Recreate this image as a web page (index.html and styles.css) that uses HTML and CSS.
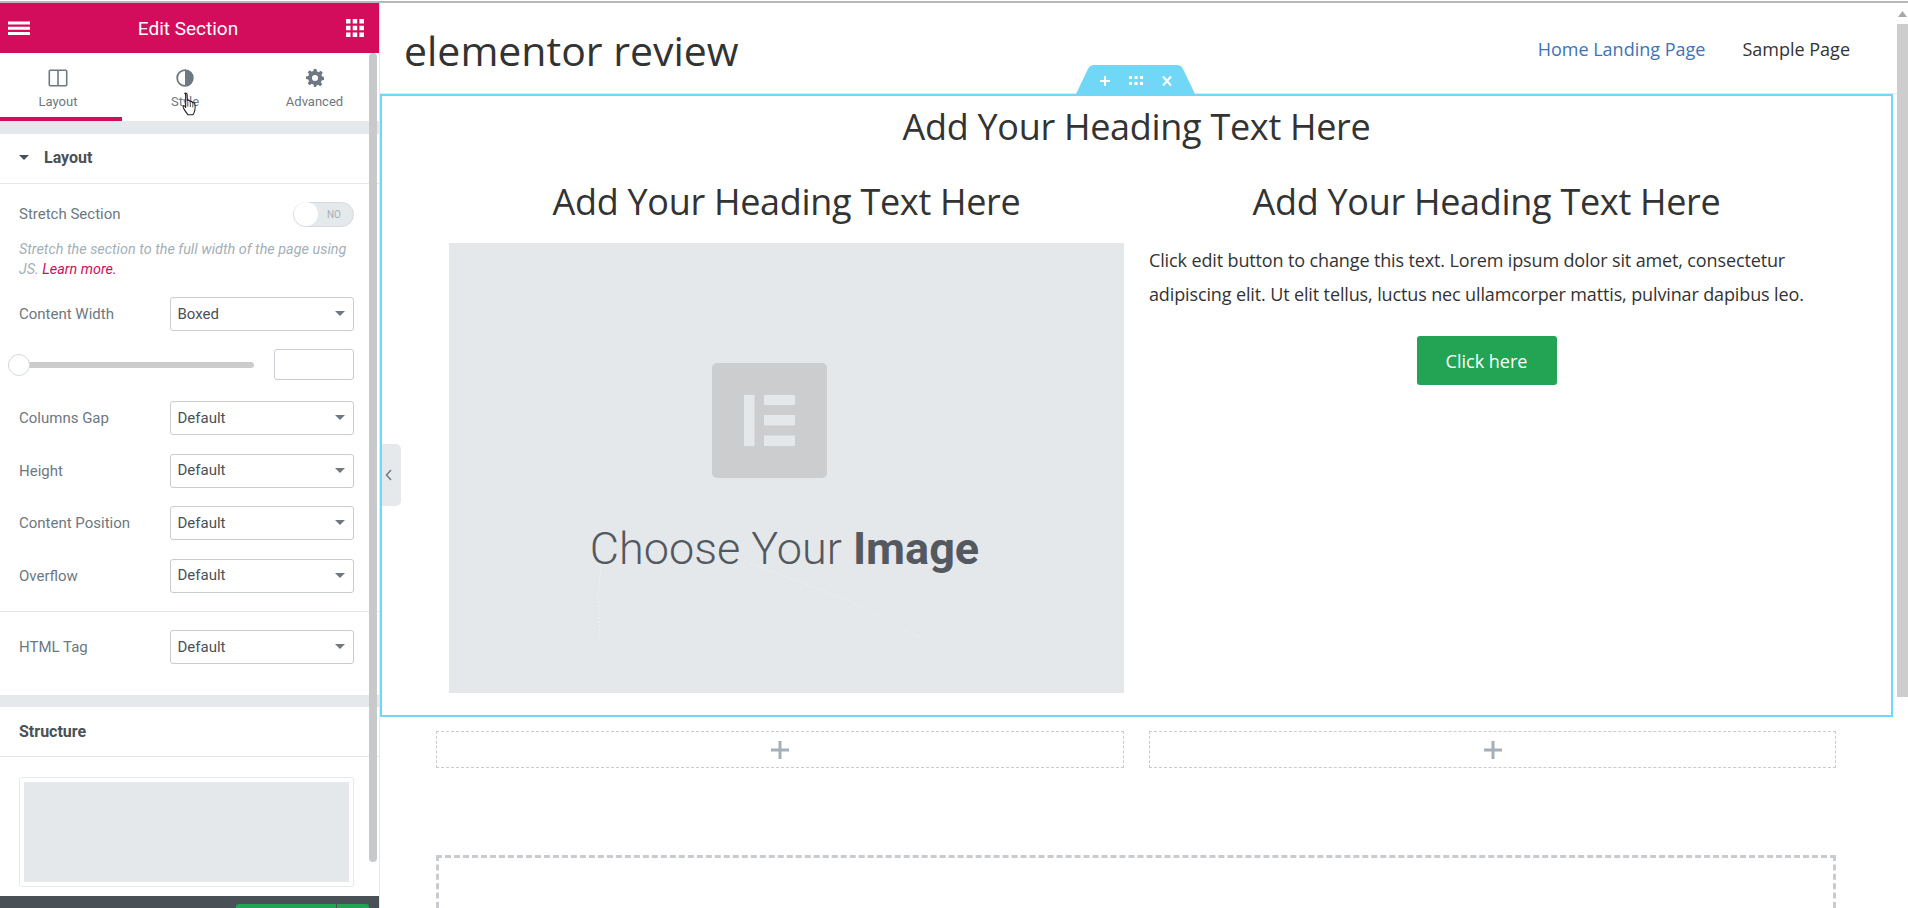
FILE: index.html
```html
<!DOCTYPE html>
<html lang="en">
<head>
    <meta charset="UTF-8">
    <title>Edit Section - elementor review</title>
    <link rel="stylesheet" href="styles.css">
</head>
<body>
    <div class="top-line"></div>
    <div class="editor">
        <aside class="panel">
            <header class="panel-head">
                <svg class="head-icon" width="22" height="16" viewBox="0 0 22 16"><path d="M0 1.500h22v3H0zM0 6.800h22v3H0zM0 12h22v3H0z" fill="#fff"/></svg>
                <span class="panel-title">Edit Section</span>
                <svg class="head-icon" width="18" height="18" viewBox="0 0 18 18" fill="#fff"><path d="M0 0h4.500v4.500H0zM6.700 0h4.500v4.500H6.700zM13.400 0H18v4.500h-4.600zM0 6.700h4.500v4.500H0zM6.700 6.700h4.500v4.500H6.700zM13.400 6.700H18v4.500h-4.600zM0 13.400h4.500V18H0zM6.700 13.400h4.500V18H6.700zM13.400 13.400H18V18h-4.600z"/></svg>
            </header>
            <nav class="tabs">
                <div class="tab active">
                    <svg width="20" height="18" viewBox="0 0 20 18" fill="none" stroke="#6d7882" stroke-width="1.600"><rect x="1.300" y="1.300" width="17.400" height="15.400" rx="1"/><path d="M10 1.300v15.400"/></svg>
                    <span>Layout</span>
                </div>
                <div class="tab">
                    <svg width="18" height="18" viewBox="0 0 18 18"><circle cx="9" cy="9" r="7.800" fill="#fff" stroke="#6d7882" stroke-width="1.800"/><path d="M9 1a8 8 0 0 1 0 16z" fill="#6d7882"/></svg>
                    <span>Style</span>
                </div>
                <div class="tab">
                    <svg width="18" height="18" viewBox="0 0 24 24"><path fill="#6d7882" fill-rule="evenodd" d="M10 0h4l.6 3.200c.8.200 1.600.500 2.300 1L19.600 2.300l2.800 2.800-1.900 2.700c.4.700.8 1.500 1 2.300L24 10.700v3.900l-3.200.6c-.2.800-.5 1.600-1 2.300l1.900 2.700-2.800 2.800-2.700-1.900c-.7.400-1.500.8-2.300 1L13.400 24H10.600L10 20.800c-.8-.2-1.600-.5-2.300-1L5 21.700 2.200 18.900l1.900-2.700c-.4-.7-.8-1.500-1-2.300L0 13.300V10l3.200-.6c.2-.8.500-1.600 1-2.300L2.300 4.400 5.100 1.600l2.700 1.900c.7-.4 1.500-.8 2.300-1zM12 8a4 4 0 1 0 0 8 4 4 0 0 0 0-8z"/></svg>
                    <span>Advanced</span>
                </div>
            </nav>
            <div class="band"></div>
            <div class="section-head layout-head">
                <span class="caret dark"></span>
                <span>Layout</span>
            </div>
            <div class="controls">
                <div class="row row-switch">
                    <label>Stretch Section</label>
                    <div class="switch"><span class="knob"></span><span class="switch-no">NO</span></div>
                </div>
                <p class="hint">Stretch the section to the full width of the page using<br>JS. <a>Learn more.</a></p>
                <div class="row row-width">
                    <label>Content Width</label>
                    <div class="select"><span>Boxed</span><span class="caret"></span></div>
                </div>
                <div class="row row-slider">
                    <div class="slider"><span class="slider-knob"></span></div>
                    <div class="number"></div>
                </div>
                <div class="row">
                    <label>Columns Gap</label>
                    <div class="select"><span>Default</span><span class="caret"></span></div>
                </div>
                <div class="row">
                    <label>Height</label>
                    <div class="select"><span>Default</span><span class="caret"></span></div>
                </div>
                <div class="row">
                    <label>Content Position</label>
                    <div class="select"><span>Default</span><span class="caret"></span></div>
                </div>
                <div class="row">
                    <label>Overflow</label>
                    <div class="select"><span>Default</span><span class="caret"></span></div>
                </div>
            </div>
            <div class="controls controls-tag">
                <div class="row">
                    <label>HTML Tag</label>
                    <div class="select"><span>Default</span><span class="caret"></span></div>
                </div>
            </div>
            <div class="band"></div>
            <div class="section-head">Structure</div>
            <div class="structure">
                <div class="structure-box"><div class="structure-col"></div></div>
            </div>
            <footer class="panel-foot">
                <div class="publish"><span class="publish-main"></span><span class="publish-more"></span></div>
            </footer>
            <div class="panel-scroll"></div>
        </aside>

        <main class="preview">
            <div class="collapse">
                <svg width="7" height="12" viewBox="0 0 7 12" fill="none" stroke="#6d7882" stroke-width="1.500"><path d="M6 1 1.500 6 6 11"/></svg>
            </div>
            <div class="page">
                <header class="site-head">
                    <div class="site-title">elementor review</div>
                    <nav class="site-nav">
                        <a class="current">Home Landing Page</a>
                        <a>Sample Page</a>
                    </nav>
                </header>
                <section class="edit-section">
                    <div class="section-handle">
                        <svg width="12" height="12" viewBox="0 0 12 12"><path d="M5 1h2v4h4v2H7v4H5V7H1V5h4z" fill="#fff"/></svg>
                        <svg width="14" height="10" viewBox="0 0 14 10" fill="#fff"><path d="M0 0h3v3H0zM5.500 0h3v3h-3zM11 0h3v3h-3zM0 6h3v3H0zM5.500 6h3v3h-3zM11 6h3v3h-3z"/></svg>
                        <svg width="12" height="12" viewBox="0 0 12 12" fill="none" stroke="#fff" stroke-width="2"><path d="m2 1.500 8 9M10 1.500l-8 9"/></svg>
                    </div>
                    <h2 class="heading heading-top">Add Your Heading Text Here</h2>
                    <div class="columns">
                        <div class="col">
                            <h2 class="heading">Add Your Heading Text Here</h2>
                            <div class="image-holder">
                                <svg class="image-marks" width="675" height="450" viewBox="0 0 675 450" fill="none" stroke="#eef0f2" stroke-dasharray="2 2"><path d="m152 322-3 30 2 45M301 320l95 36 80 41"/></svg>
                                <div class="image-logo">
                                    <svg width="52" height="52" viewBox="0 0 52 52" fill="#e5e8eb"><path d="M0 0h10.500v51H0zM20 0h31v10H20zM20 20h31v10.500H20zM20 40.500h31V51H20z"/></svg>
                                </div>
                                <div class="image-text">Choose Your <b>Image</b></div>
                            </div>
                        </div>
                        <div class="col">
                            <h2 class="heading">Add Your Heading Text Here</h2>
                            <p class="lorem">Click edit button to change this text. Lorem ipsum dolor sit amet, consectetur adipiscing elit. Ut elit tellus, luctus nec ullamcorper mattis, pulvinar dapibus leo.</p>
                            <div class="btn-wrap"><a class="btn">Click here</a></div>
                        </div>
                    </div>
                </section>
                <div class="empty-row">
                    <div class="empty-col"><svg width="18" height="18" viewBox="0 0 18 18"><path d="M7.500 0h3v7.500H18v3h-7.500V18h-3v-7.500H0v-3h7.500z" fill="#a4afb7"/></svg></div>
                    <div class="empty-col"><svg width="18" height="18" viewBox="0 0 18 18"><path d="M7.500 0h3v7.500H18v3h-7.500V18h-3v-7.500H0v-3h7.500z" fill="#a4afb7"/></svg></div>
                </div>
                <div class="add-section"></div>
            </div>
            <div class="page-scroll">
                <svg width="9" height="6" viewBox="0 0 9 6"><path d="M4.500 0 9 6H0z" fill="#a8a8a8"/></svg>
                <div class="page-thumb"></div>
            </div>
        </main>
    </div>
    <svg class="hand" width="21" height="26" viewBox="0 0 26 32"><path d="M6 1.500c1.200-.8 2.600 0 2.800 1.400l.4 8 .5-.3c.8-.5 2-.3 2.500.4l.3 1c.9-.6 2.100-.4 2.700.4l.3.9c1-.5 2.200-.2 2.700.8.600 1.800.6 6 .2 8.400-.4 2.300-1.500 4.200-2.300 5.500H9.800c-1-1.600-3.200-3.700-4.700-6.600-1-1.900-1.500-4-.9-4.500.7-.6 1.900.5 2.800 2.100V3.500c-.2-.8-.4-1.500-1-2z" fill="#fff" stroke="#222" stroke-width="1.400" stroke-linejoin="round"/><path d="M9.700 12v6M12.800 12.500v6M15.900 14v5" stroke="#222" fill="none"/></svg>
</body>
</html>
```

FILE: styles.css
```css
* {
    box-sizing: border-box;
}
html, body {
    margin: 0;
    height: 908px;
    overflow: hidden;
    background-color: #ffffff;
}
body {
    font-family: "Open Sans", "Noto Sans", sans-serif;
    color: #333333;
}
.top-line {
    height: 3px;
    border-top: 1px solid #ffffff;
    border-bottom: 2px solid #b9b9b9;
}
.editor {
    display: flex;
    height: 905px;
}

/* left panel */
.panel {
    position: relative;
    width: 380px;
    flex: none;
    display: flex;
    flex-direction: column;
    font-family: Roboto, sans-serif;
    border-right: 1px solid #e6e9ec;
}
.panel-head {
    height: 50px;
    flex: none;
    padding: 0 8px;
    background-color: #d30c5c;
    color: #ffffff;
    display: flex;
    align-items: center;
    justify-content: space-between;
}
.panel-head .head-icon:last-child {
    margin-right: 7px;
}
.panel-title {
    font-size: 19px;
}
.tabs {
    height: 69px;
    display: flex;
    flex: none;
    border-bottom: 1px solid #e6e9ec;
}
.tab {
    width: 122px;
    height: 68px;
    display: flex;
    flex-direction: column;
    align-items: center;
    padding-top: 16px;
    font-size: 13px;
    color: #6d7882;
}
.tab span {
    margin-top: 7px;
}
.tab:nth-child(2) {
    width: 126px;
}
.tab:nth-child(3) {
    padding-left: 11px;
}
.tab.active {
    border-bottom: 4px solid #d30c5c;
    padding-right: 6px;
}
.band {
    height: 12px;
    flex: none;
    background-color: #e6e9ec;
}
.section-head {
    height: 50px;
    flex: none;
    display: flex;
    align-items: center;
    gap: 15px;
    padding-left: 19px;
    font-size: 16px;
    font-weight: 700;
    color: #495157;
    border-bottom: 1px solid #e6e9ec;
}
.layout-head {
    padding-bottom: 2px;
}
.controls {
    flex: none;
    padding: 13px 25px 0 19px;
}
.row {
    height: 34px;
    margin-bottom: 18.5px;
    display: flex;
    align-items: center;
    justify-content: space-between;
}
.row label {
    font-size: 15px;
    color: #6d7882;
}
.row-switch {
    margin-bottom: 0;
}
.switch {
    width: 61px;
    height: 25px;
    margin-top: 0;
    border: 1px solid #d5dadf;
    border-radius: 13px;
    background-color: #e6e9ec;
    display: flex;
    align-items: center;
    justify-content: space-between;
}
.knob {
    width: 24px;
    height: 24px;
    border-radius: 50%;
    background-color: #ffffff;
}
.switch-no {
    font-size: 10px;
    color: #a4afb7;
    margin-right: 12px;
}
.hint {
    margin: 8.5px 0 0;
    font-size: 14.4px;
    font-style: italic;
    line-height: 20px;
    color: #a4afb7;
}
.hint a {
    color: #d30c5c;
}
.row-width {
    margin-top: 17.5px;
    margin-bottom: 18px;
}
.select {
    width: 184px;
    height: 34px;
    padding: 0 8px 1px 6.5px;
    border: 1px solid #c8ccd0;
    border-radius: 3px;
    font-size: 15px;
    color: #495157;
    display: flex;
    align-items: center;
    justify-content: space-between;
}
.caret {
    width: 0;
    height: 0;
    border-left: 5px solid transparent;
    border-right: 5px solid transparent;
    border-top: 5px solid #6d7882;
}
.caret.dark {
    border-top-color: #495157;
}
.row-slider {
    height: 31px;
    margin-bottom: 21px;
    margin-left: -11px;
}
.slider {
    width: 246px;
    height: 6px;
    border-radius: 3px;
    background-color: #cccccc;
    display: flex;
    align-items: center;
}
.slider-knob {
    width: 22px;
    height: 22px;
    border: 1px solid #d5dadf;
    border-radius: 50%;
    background-color: #ffffff;
}
.number {
    width: 80px;
    height: 31px;
    border: 1px solid #c8ccd0;
    border-radius: 3px;
}
.controls-tag {
    padding-top: 18px;
    padding-bottom: 12.5px;
    border-top: 1px solid #e6e9ec;
}
.structure {
    flex: 1;
    padding: 20px 25px 0 19px;
}
.structure-box {
    height: 110px;
    padding: 4px;
    border: 1px solid #e6e9ec;
    border-radius: 3px;
}
.structure-col {
    height: 100%;
    background-color: #e5e8eb;
}
.panel-foot {
    height: 12px;
    flex: none;
    padding: 8px 10px 0 0;
    background-color: #495157;
    overflow: hidden;
    display: flex;
    justify-content: flex-end;
}
.publish {
    width: 133px;
    height: 4px;
    display: flex;
    gap: 1px;
}
.publish-main {
    flex: 1;
    border-radius: 3px 0 0 0;
    background-color: #23a455;
}
.publish-more {
    width: 32px;
    border-radius: 0 3px 0 0;
    background-color: #23a455;
}
.panel-scroll {
    position: absolute;
    top: 50px;
    left: 369px;
    width: 8px;
    height: 809px;
    border-radius: 4px;
    background-color: #c8c9cb;
}

/* preview */
.preview {
    position: relative;
    flex: 1;
    min-width: 0;
    display: flex;
}
.collapse {
    position: absolute;
    top: 441px;
    left: -1px;
    width: 22px;
    height: 62px;
    padding-right: 3px;
    border-radius: 0 5px 5px 0;
    background-color: #e6e9ec;
    display: flex;
    align-items: center;
    justify-content: center;
}
.page {
    flex: 1;
    min-width: 0;
}
.site-head {
    height: 91px;
    padding: 0 47px 0 24px;
    display: flex;
    align-items: center;
    justify-content: space-between;
    border-bottom: 1px solid #e6e9ec;
}
.site-title {
    font-size: 41px;
    color: #333333;
    margin-top: 4px;
}
.site-nav {
    display: flex;
    gap: 37px;
    font-size: 18px;
    margin-top: 1px;
}
.site-nav .current {
    color: #3b73b9;
}
.edit-section {
    position: relative;
    height: 623px;
    margin-right: 4px;
    padding-top: 5px;
    border: 2px solid #71d7f7;
}
.section-handle {
    position: absolute;
    top: -31px;
    left: 693px;
    width: 121px;
    height: 31px;
    background-color: #71d7f7;
    clip-path: path("M0 31 L13 4 Q15 0 19 0 H102 Q106 0 108 4 L121 31 Z");
    display: flex;
    align-items: center;
    justify-content: center;
    gap: 18px;
}
.heading {
    margin: 0;
    font-size: 36px;
    font-weight: 400;
    letter-spacing: -0.3px;
    line-height: 52px;
    text-align: center;
    color: #333333;
}
.heading-top {
    height: 75px;
}
.columns {
    display: flex;
    gap: 25px;
    padding-left: 67px;
}
.col {
    width: 675px;
    flex: none;
}
.image-holder {
    position: relative;
    height: 450px;
    margin-top: 15px;
    padding-top: 120px;
    background-color: #e5e8eb;
    display: flex;
    flex-direction: column;
    align-items: center;
    font-family: Roboto, sans-serif;
}
.image-marks {
    position: absolute;
    top: 0;
    left: 0;
}
.image-logo {
    position: relative;
    width: 115px;
    height: 115px;
    margin-right: 34px;
    padding-left: 1px;
    border-radius: 5px;
    background-color: #cbcdcf;
    display: flex;
    align-items: center;
    justify-content: center;
}
.image-text {
    position: relative;
    margin-top: 44px;
    margin-right: 4px;
    font-size: 45px;
    font-weight: 300;
    color: #54595f;
}
.image-text b {
    font-weight: 700;
}
.lorem {
    margin: 15px 0 0;
    font-size: 18px;
    letter-spacing: -0.13px;
    line-height: 34px;
    color: #333333;
}
.btn-wrap {
    display: flex;
    justify-content: center;
    margin-top: 25px;
}
.btn {
    width: 140px;
    height: 49px;
    border-radius: 3px;
    background-color: #23a455;
    color: #ffffff;
    font-size: 18px;
    display: flex;
    align-items: center;
    justify-content: center;
}
.empty-row {
    display: flex;
    gap: 25px;
    margin: 14px 0 0 56px;
}
.empty-col {
    width: 688px;
    height: 37px;
    border: 1px dashed #c8ccd0;
    display: flex;
    align-items: center;
    justify-content: center;
}
.empty-col:last-child {
    width: 687px;
}
.add-section {
    width: 1400px;
    height: 53px;
    margin: 87px 0 0 56px;
    border: 3px dashed #c8ccd0;
    border-bottom: none;
}
.page-scroll {
    width: 11px;
    flex: none;
    display: flex;
    flex-direction: column;
    align-items: center;
    padding-top: 8px;
}
.page-thumb {
    width: 11px;
    height: 673px;
    margin-top: 7px;
    background-color: #cdcdcd;
}

/* mouse pointer over the Style tab */
.hand {
    position: absolute;
    top: 92px;
    left: 180px;
}
```
